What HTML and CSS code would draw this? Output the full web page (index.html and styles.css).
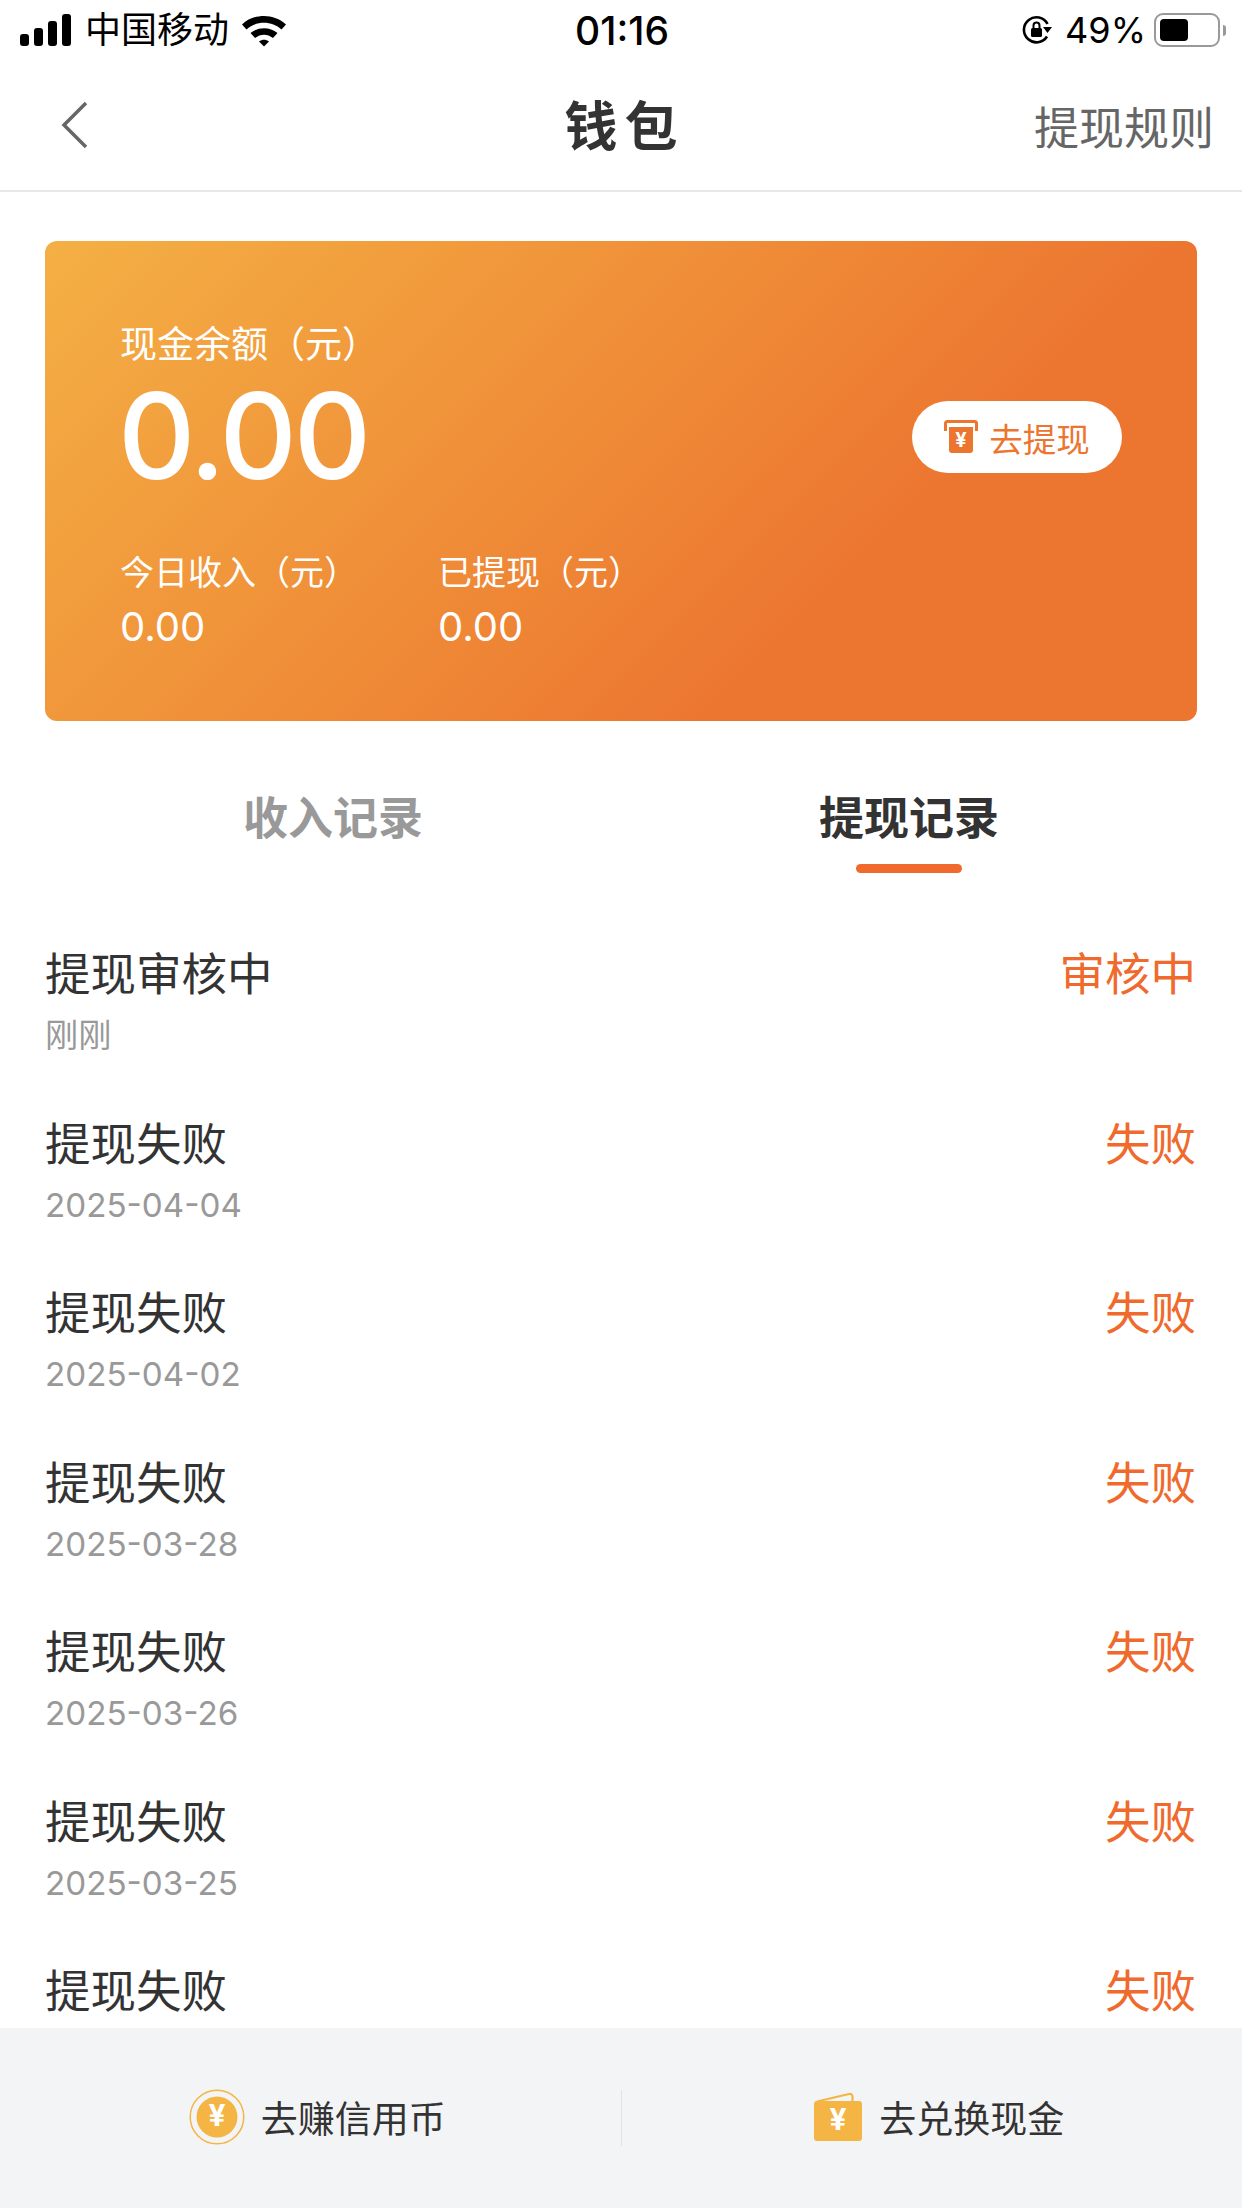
FILE: index.html
```html
<!DOCTYPE html>
<html>
<head>
    <title>钱包</title>
    <meta name="viewport" content="width=device-width, initial-scale=1.0">
    <link rel="stylesheet" href="styles.css">
</head>
<body>
    <div class="page">
        <div class="status-bar">
            <div class="status-left">
                <svg class="signal" width="52" height="34" viewBox="0 0 52 34">
                    <rect x="0" y="21" width="9" height="12" rx="3"/>
                    <rect x="14" y="15" width="9" height="18" rx="3"/>
                    <rect x="28" y="8" width="9" height="25" rx="3"/>
                    <rect x="42" y="1" width="9" height="32" rx="3"/>
                </svg>
                <span class="carrier">中国移动</span>
                <svg class="wifi" width="46" height="34" viewBox="0 0 46 34">
                    <path d="M1 11.5 C13 0 33 0 45 11.5 L40.5 16.5 C31 7.5 15 7.5 5.5 16.5 Z"/>
                    <path d="M9.500 20 C17 13.500 29 13.500 36.500 20 L32 25 C26.500 20.500 19.500 20.500 14 25 Z"/>
                    <path d="M18 28.500 C21 26 25 26 28 28.500 L23 33.500 Z"/>
                </svg>
            </div>
            <div class="status-time">01:16</div>
            <div class="status-right">
                <svg class="rotate-lock" width="32" height="32" viewBox="0 0 32 32">
                    <path d="M26 22.500 A12.500 12.500 0 1 1 26.500 10" fill="none" stroke="#000" stroke-width="2.600"/>
                    <path d="M22 13 L31 13 L26.500 19 Z"/>
                    <rect x="10" y="14" width="11" height="9" rx="1.500"/>
                    <path d="M12.500 14 V11.500 A3 3 0 0 1 18.500 11.500 V14" fill="none" stroke="#000" stroke-width="2"/>
                </svg>
                <span class="battery-text">49%</span>
                <div class="battery">
                    <div class="battery-fill"></div>
                </div>
                <div class="battery-cap"></div>
            </div>
        </div>

        <div class="nav">
            <svg class="back" width="30" height="50" viewBox="0 0 30 50">
                <path d="M26 3 L4 25 L26 47" fill="none" stroke="#666" stroke-width="3.500"/>
            </svg>
            <div class="nav-title">钱包</div>
            <div class="nav-rule">提现规则</div>
        </div>

        <div class="card">
            <div class="card-top">
                <div>
                    <div class="balance-label">现金余额（元）</div>
                    <div class="balance">0.00</div>
                </div>
                <div class="withdraw-btn">
                    <svg width="34" height="34" viewBox="0 0 34 34">
                        <path d="M1.500 11 V3.500 Q1.500 1.500 3.500 1.500 H30.500 Q32.500 1.500 32.500 3.500 V11" fill="none" stroke="#EC7530" stroke-width="3"/>
                        <path d="M5 7 H29 V30 Q29 33 26 33 H8 Q5 33 5 30 Z" fill="#EC7530"/>
                        <text x="17" y="27" text-anchor="middle" class="yen-small">¥</text>
                    </svg>
                    <span>去提现</span>
                </div>
            </div>
            <div class="card-stats">
                <div class="stat">
                    <div class="card-label">今日收入（元）</div>
                    <div class="stat-value">0.00</div>
                </div>
                <div class="stat">
                    <div class="card-label">已提现（元）</div>
                    <div class="stat-value">0.00</div>
                </div>
            </div>
        </div>

        <div class="tabs">
            <div class="tab">收入记录</div>
            <div class="tab active">提现记录</div>
        </div>

        <div class="records">
            <div class="record">
                <div>
                    <div class="record-title">提现审核中</div>
                    <div class="record-date">刚刚</div>
                </div>
                <div class="record-status">审核中</div>
            </div>
            <div class="record">
                <div>
                    <div class="record-title">提现失败</div>
                    <div class="record-date">2025-04-04</div>
                </div>
                <div class="record-status">失败</div>
            </div>
            <div class="record">
                <div>
                    <div class="record-title">提现失败</div>
                    <div class="record-date">2025-04-02</div>
                </div>
                <div class="record-status">失败</div>
            </div>
            <div class="record">
                <div>
                    <div class="record-title">提现失败</div>
                    <div class="record-date">2025-03-28</div>
                </div>
                <div class="record-status">失败</div>
            </div>
            <div class="record">
                <div>
                    <div class="record-title">提现失败</div>
                    <div class="record-date">2025-03-26</div>
                </div>
                <div class="record-status">失败</div>
            </div>
            <div class="record">
                <div>
                    <div class="record-title">提现失败</div>
                    <div class="record-date">2025-03-25</div>
                </div>
                <div class="record-status">失败</div>
            </div>
            <div class="record">
                <div>
                    <div class="record-title">提现失败</div>
                </div>
                <div class="record-status">失败</div>
            </div>
        </div>

        <div class="bottom-bar">
            <div class="bottom-btn">
                <svg width="56" height="56" viewBox="0 0 56 56">
                    <circle cx="28" cy="28" r="26.800" fill="none" stroke="#F5B544" stroke-width="1.500"/>
                    <circle cx="28" cy="28" r="20.500" fill="#F5B544"/>
                    <text x="28" y="37" text-anchor="middle" class="yen">¥</text>
                </svg>
                <span>去赚信用币</span>
            </div>
            <div class="bottom-btn">
                <svg width="50" height="50" viewBox="0 0 50 50">
                    <path d="M4 9.500 L36 2 Q39.500 1.500 39.500 5 V10" fill="none" stroke="#F5B544" stroke-width="2.200"/>
                    <rect x="1" y="9" width="48" height="40" rx="3" fill="#F5B544"/>
                    <text x="25" y="38" text-anchor="middle" class="yen">¥</text>
                </svg>
                <span>去兑换现金</span>
            </div>
        </div>
    </div>
</body>
</html>
```

FILE: styles.css
```css
* { box-sizing: border-box; }

body {
    margin: 0;
    background: white;
    color: #333;
    font-family: Inter, "Noto Sans CJK SC", sans-serif;
}

.page {
    display: flex;
    flex-direction: column;
    height: 2208px;
    overflow: hidden;
}

.status-bar {
    display: flex;
    justify-content: space-between;
    align-items: center;
    height: 60px;
    padding: 0 16px 0 20px;
    color: black;
}

.status-left, .status-right {
    display: flex;
    align-items: center;
    width: 420px;
}

.status-right { justify-content: flex-end; }

.carrier {
    font-size: 36px;
    margin-left: 13px;
    line-height: 60px;
}

.wifi { margin-left: 12px; }

.status-time {
    flex: 1;
    text-align: center;
    font-size: 39px;
    font-weight: 500;
    padding-right: 2px;
}

.battery-text {
    font-size: 36px;
    margin: 0 8px 0 12px;
}

.battery {
    width: 66px;
    height: 34px;
    border: 2px solid #999;
    border-radius: 9px;
    padding: 4px;
}

.battery-fill {
    width: 28px;
    height: 100%;
    background: black;
    border-radius: 4px;
}

.battery-cap {
    width: 3px;
    height: 11px;
    margin-left: 3px;
    background: #999;
    border-radius: 0 3px 3px 0;
}

.nav {
    display: flex;
    align-items: center;
    justify-content: space-between;
    height: 132px;
    padding: 0 28px 0 60px;
    border-bottom: 2px solid #e8e8e8;
    position: relative;
}

.nav-title {
    position: absolute;
    left: 0;
    right: 0;
    margin-top: -5px;
    padding-left: 7px;
    text-align: center;
    font-size: 53px;
    font-weight: 700;
    letter-spacing: 7px;
}

.nav-rule {
    font-size: 45px;
    color: #666;
}

.card {
    margin: 49px 45px 0;
    height: 480px;
    padding: 81px 75px 0 75px;
    border-radius: 12px;
    color: white;
    background: linear-gradient(135deg, #F4B044 0%, #EF8B37 45%, #EC7530 71%, #EC7530 100%);
}

.card-top {
    display: flex;
    justify-content: space-between;
    align-items: center;
}

.balance-label {
    font-size: 37px;
    line-height: 46px;
}

.card-label {
    font-size: 34px;
    line-height: 46px;
}

.balance {
    font-size: 120px;
    line-height: 122px;
    margin-top: 7px;
    margin-left: -2px;
    font-weight: 500;
    letter-spacing: -3px;
}

.withdraw-btn {
    display: flex;
    align-items: center;
    justify-content: center;
    gap: 11px;
    width: 210px;
    height: 72px;
    margin-top: 55px;
    border-radius: 36px;
    background: white;
    color: #EC7530;
    font-size: 33.5px;
}

.card-stats {
    display: flex;
    margin-top: 53px;
}

.stat { width: 318px; }

.stat-value {
    margin-top: 2px;
    font-size: 40px;
    line-height: 58px;
}

.yen {
    font-size: 30px;
    font-weight: 700;
    fill: white;
}

.yen-small {
    font-size: 20px;
    font-weight: 700;
    fill: white;
}

.tabs {
    display: flex;
    margin-top: 66px;
    padding: 0 45px;
}

.tab {
    position: relative;
    flex: 1;
    text-align: center;
    font-size: 45px;
    font-weight: 700;
    line-height: 64px;
    color: #999;
}

.tab.active { color: #333; }

.tab.active::after {
    content: "";
    position: absolute;
    left: 50%;
    bottom: -22px;
    width: 106px;
    height: 9px;
    margin-left: -53px;
    border-radius: 5px;
    background: #EF6A2C;
}

.records {
    flex: 1;
    overflow: hidden;
    margin-top: 93px;
    padding: 0 46px 0 45px;
}

.record {
    display: flex;
    justify-content: space-between;
    align-items: flex-start;
    height: 169.5px;
}

.record-title {
    font-size: 45.5px;
    line-height: 62px;
}

.record-date {
    font-size: 33.2px;
    line-height: 58px;
    color: #999;
}

.record-status {
    font-size: 45.5px;
    line-height: 62px;
    color: #EF6A2C;
}

.bottom-bar {
    display: flex;
    align-items: center;
    height: 180px;
    background: #F3F4F6;
}

.bottom-btn {
    flex: 1;
    display: flex;
    align-items: center;
    justify-content: center;
    gap: 16px;
    height: 56px;
    padding: 0 0 2px 14px;
    font-size: 37px;
}

.bottom-btn + .bottom-btn { border-left: 1px solid #e3e3e3; }
```
